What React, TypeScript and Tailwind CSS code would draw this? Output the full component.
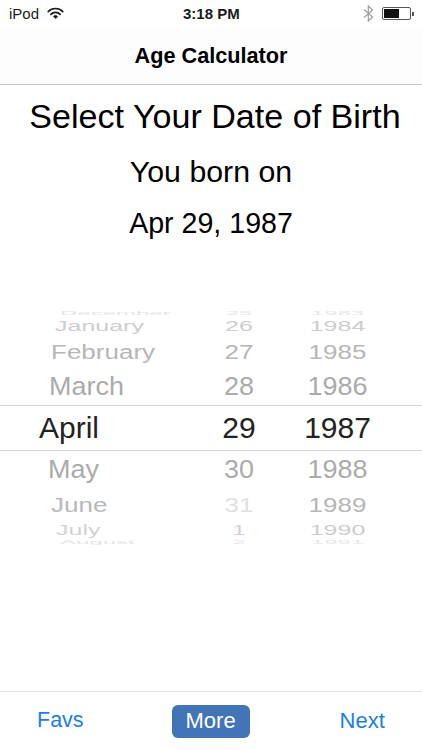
import React from 'react';

const rows = [
  { month: 'December', day: '25', year: '1983', monthPad: 'pl-[60px]', h: 'h-[6px]', scale: 'scale-y-[0.22]', month2: 'text-[#e4e4e4]', day2: 'text-[#e6e6e6]', year2: 'text-[#e6e6e6]', size: 'text-[24px]' },
  { month: 'January', day: '26', year: '1984', monthPad: 'pl-[55px]', h: 'h-[20px]', scale: 'scale-y-[0.55]', month2: 'text-[#cdcdcd]', day2: 'text-[#cdcdcd]', year2: 'text-[#cdcdcd]', size: 'text-[25px]' },
  { month: 'February', day: '27', year: '1985', monthPad: 'pl-[51px]', h: 'h-[31px]', scale: 'scale-y-[0.8]', month2: 'text-[#b6b6b6]', day2: 'text-[#b6b6b6]', year2: 'text-[#b6b6b6]', size: 'text-[26px]' },
  { month: 'March', day: '28', year: '1986', monthPad: 'pl-[49px]', h: 'h-[38px]', scale: 'scale-y-[0.96]', month2: 'text-[#ababab]', day2: 'text-[#ababab]', year2: 'text-[#ababab]', size: 'text-[27px]' },
];

const rowsBelow = [
  { month: 'May', day: '30', year: '1988', monthPad: 'pl-[48px]', h: 'h-[37px]', scale: 'scale-y-[0.96]', month2: 'text-[#ababab]', day2: 'text-[#ababab]', year2: 'text-[#ababab]', size: 'text-[27px]' },
  { month: 'June', day: '31', year: '1989', monthPad: 'pl-[51px]', h: 'h-[34px]', scale: 'scale-y-[0.8]', month2: 'text-[#b8b8b8]', day2: 'text-[#e0e0e0]', year2: 'text-[#b6b6b6]', size: 'text-[26px]' },
  { month: 'July', day: '1', year: '1990', monthPad: 'pl-[56px]', h: 'h-[16px]', scale: 'scale-y-[0.55]', month2: 'text-[#d2d2d2]', day2: 'text-[#d2d2d2]', year2: 'text-[#cdcdcd]', size: 'text-[25px]' },
  { month: 'August', day: '2', year: '1991', monthPad: 'pl-[60px]', h: 'h-[8px]', scale: 'scale-y-[0.22]', month2: 'text-[#e4e4e4]', day2: 'text-[#e6e6e6]', year2: 'text-[#e6e6e6]', size: 'text-[24px]' },
];

type Row = (typeof rows)[number];

const PickerRow: React.FC<{ row: Row }> = ({ row }) => (
  <div className={`flex items-center overflow-hidden leading-none ${row.h} ${row.size}`}>
    <div className={`w-[210px] ${row.monthPad} ${row.month2} ${row.scale}`}>{row.month}</div>
    <div className={`w-[58px] text-center ${row.day2} ${row.scale}`}>{row.day}</div>
    <div className={`w-[139px] text-center ${row.year2} ${row.scale}`}>{row.year}</div>
  </div>
);

const StatusBar: React.FC = () => (
  <div className="relative flex h-[28px] items-center justify-between pb-[1px] pl-[9px] pr-[8px] text-[#1a1a1a]">
    <div className="flex items-center gap-[8px]">
      <span className="text-[15px] leading-none">iPod</span>
      <svg width="17" height="13" viewBox="0 0 17 13" fill="none" stroke="#1a1a1a" strokeLinecap="round">
        <path d="M1.2 4.6a10.2 10.2 0 0 1 14.6 0" strokeWidth="1.6" />
        <path d="M3.8 7.4a6.4 6.4 0 0 1 9.4 0" strokeWidth="1.6" />
        <path d="M8.5 11.4l-2.1-2a3 3 0 0 1 4.2 0z" fill="#1a1a1a" strokeWidth="0.6" />
      </svg>
    </div>
    <span className="absolute left-[183px] text-[15px] font-bold leading-none">3:18 PM</span>
    <div className="flex items-center gap-[8px]">
      <svg width="11" height="17" viewBox="0 0 11 17" fill="none" stroke="#9a9a9a" strokeWidth="1.1">
        <path d="M1 4.5l8.5 7.5-4.2 4V1l4.2 4L1 12.5" />
      </svg>
      <div className="flex items-center">
        <div className="h-[13px] w-[29px] rounded-[2px] border border-[#555] p-[1px]">
          <div className="h-full w-[15px] bg-[#111]" />
        </div>
        <div className="ml-[1px] h-[4px] w-[2px] bg-[#555]" />
      </div>
    </div>
  </div>
);

export default function App() {
  return (
    <div className="flex h-[750px] w-[422px] flex-col overflow-hidden bg-white font-['Liberation_Sans',Arial,sans-serif] text-black">
      <StatusBar />
      <div className="flex h-[57px] items-center justify-center border-b border-[#c8c8c8] bg-[#fdfdfd] pb-[1px]">
        <h1 className="text-[21.7px] font-bold leading-none">Age Calculator</h1>
      </div>

      <div className="flex flex-col items-center">
        <div className="mt-[12px] pl-[8px] text-[34.1px] leading-[38px]">Select Your Date of Birth</div>
        <div className="mt-[19px] text-[30.3px] leading-[36px]">You born on</div>
        <div className="mt-[15px] text-[28.6px] leading-[36px]">Apr 29, 1987</div>
      </div>

      <div className="mt-[69px] flex flex-col">
        {rows.map(r => <PickerRow key={r.month} row={r} />)}
        <div className="flex h-[46px] items-center border-y border-[#d4d4d4] text-[30px] leading-none text-[#222]">
          <div className="w-[210px] pl-[39px]">April</div>
          <div className="w-[58px] text-center">29</div>
          <div className="w-[139px] text-center">1987</div>
        </div>
        {rowsBelow.map(r => <PickerRow key={r.month} row={r} />)}
      </div>

      <div className="mt-auto flex h-[59px] items-center border-t border-[#e2e2e2] text-[21.5px] leading-none text-[#1a7ef0]">
        <span className="ml-[37px]">Favs</span>
        <button className="ml-[88px] flex h-[33px] w-[78px] items-center justify-center rounded-[6px] bg-[#4274b8] text-[22px] text-white">More</button>
        <span className="ml-[90px] text-[22px]">Next</span>
      </div>
    </div>
  );
}
